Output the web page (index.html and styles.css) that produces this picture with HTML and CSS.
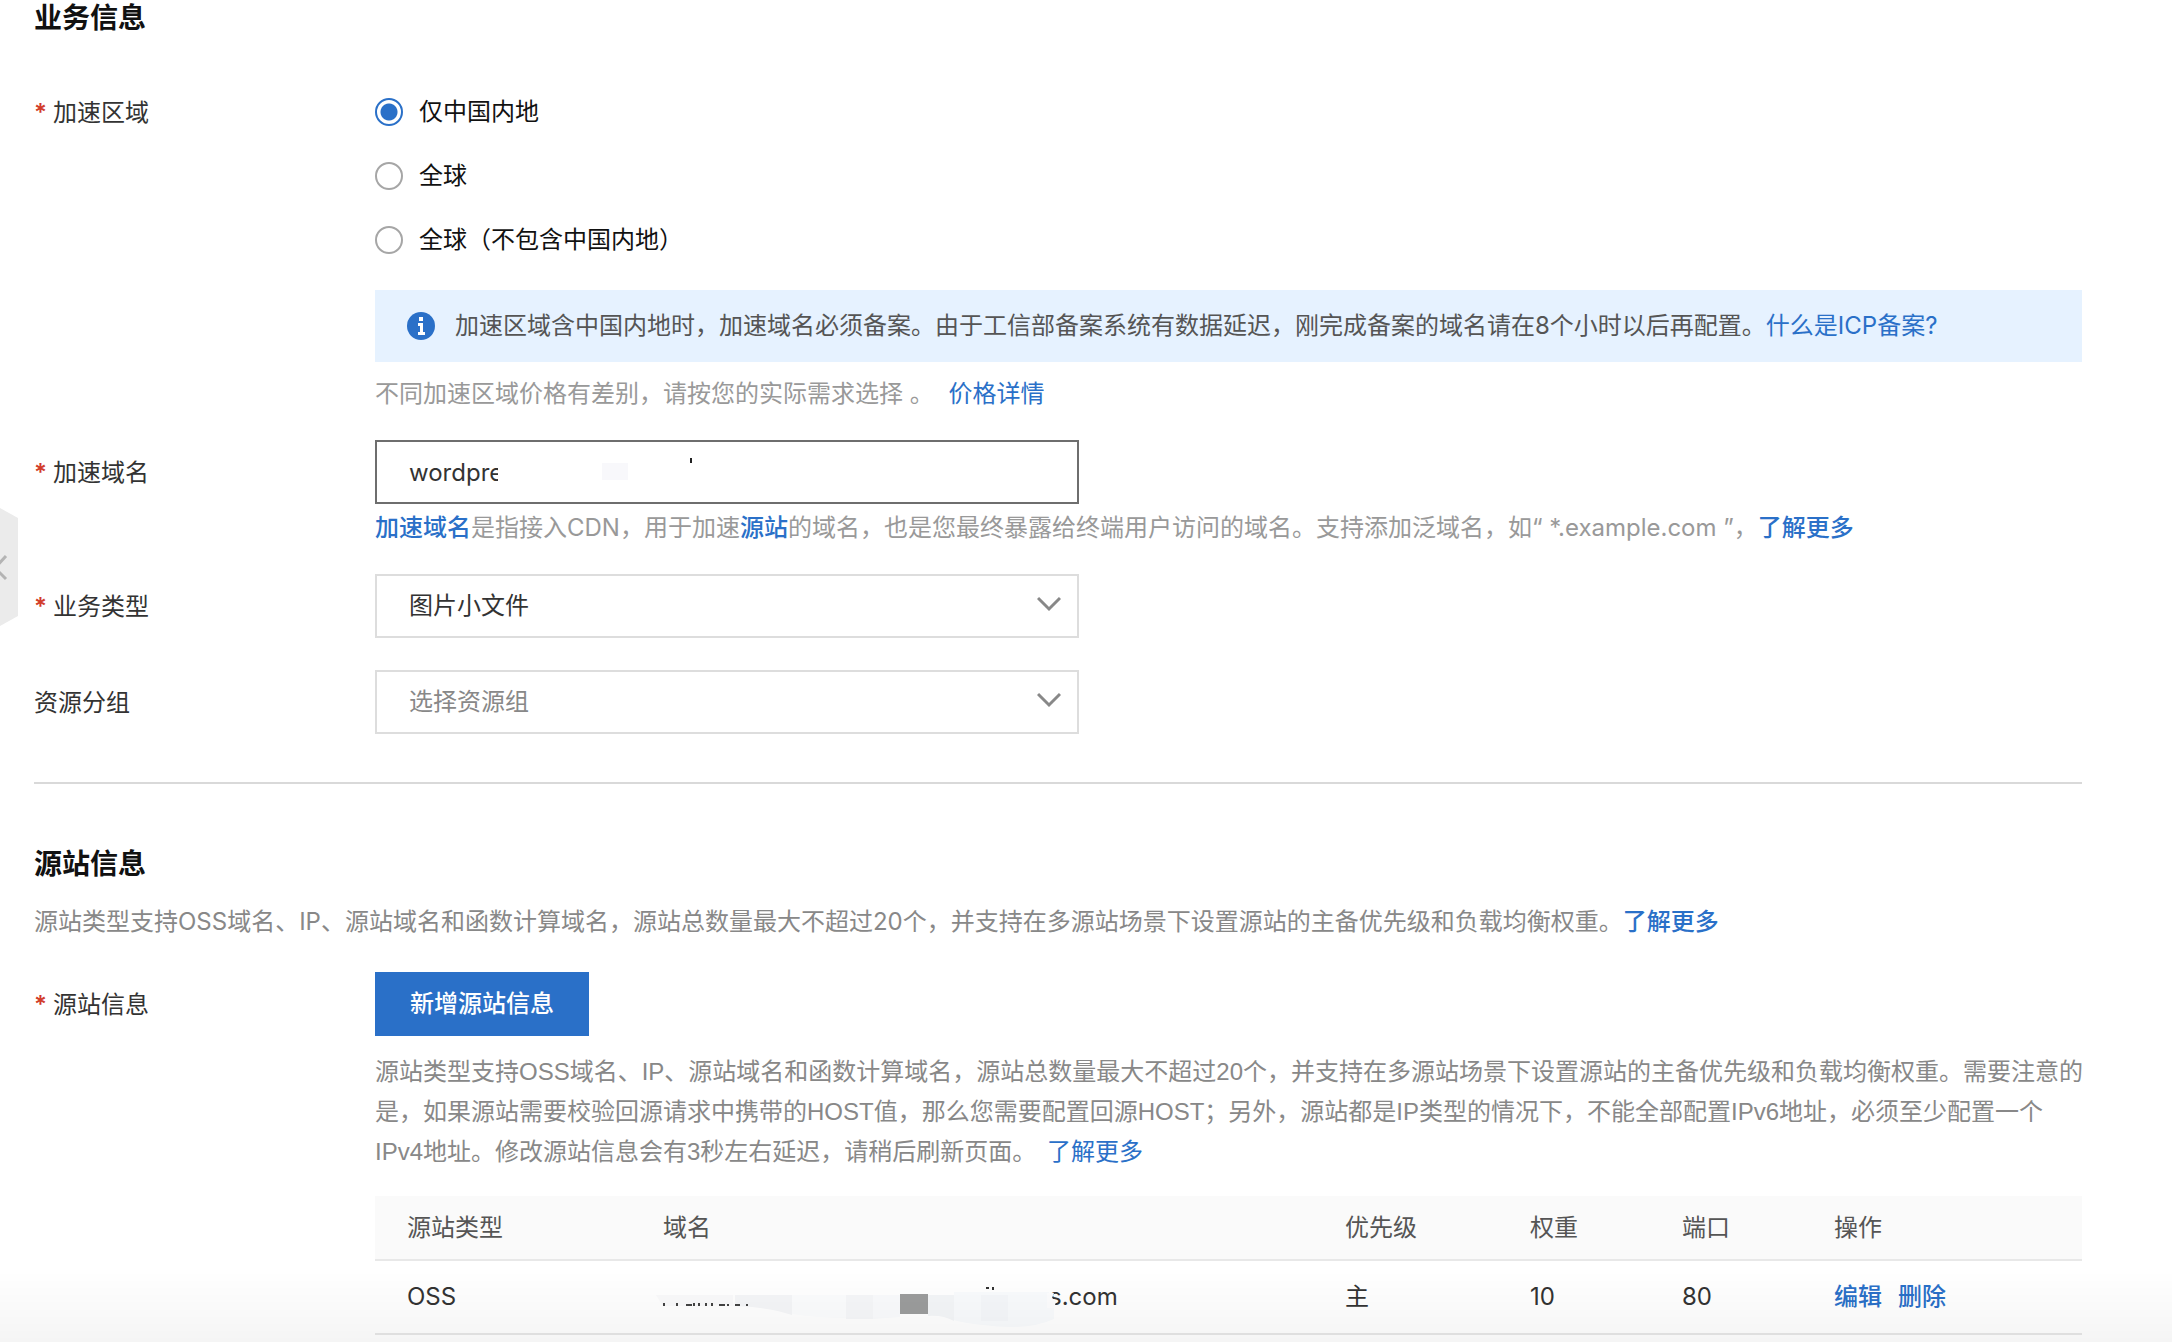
FILE: index.html
```html
<!DOCTYPE html>
<html lang="zh-CN">
<head>
<meta charset="utf-8">
<meta name="viewport" content="width=device-width, initial-scale=1">
<title>添加域名</title>
<link rel="stylesheet" href="styles.css">
</head>
<body>
<button class="side-handle" type="button" aria-label="收起">
  <svg width="18" height="118" viewBox="0 0 18 118" aria-hidden="true">
    <path d="M0 0L18 10V108L0 118Z" fill="#ebebeb"/>
    <path d="M6 48L-5 60L6 71" fill="none" stroke="#b4b4b4" stroke-width="3"/>
  </svg>
</button>

<main class="page">
  <section class="section">
    <h2 class="section-title">业务信息</h2>

    <div class="row row-region">
      <span class="label required" id="region-label">加速区域</span>
      <div class="field">
        <div class="radios" role="radiogroup" aria-labelledby="region-label">
          <label class="radio"><input type="radio" name="region" checked>仅中国内地</label>
          <label class="radio"><input type="radio" name="region">全球</label>
          <label class="radio"><input type="radio" name="region">全球（不包含中国内地）</label>
        </div>
        <div class="notice">
          <svg class="notice-icon" width="28" height="28" viewBox="0 0 28 28" aria-hidden="true">
            <circle cx="14" cy="14" r="14" fill="#2a70c8"/>
            <path d="M12 5h4v4h-4zM11 11h5v9h2v3h-7v-3h2v-6h-2z" fill="#fff"/>
          </svg>
          <p class="notice-text">加速区域含中国内地时，加速域名必须备案。由于工信部备案系统有数据延迟，刚完成备案的域名请在8个小时以后再配置。<a href="#">什么是ICP备案?</a></p>
        </div>
        <p class="hint hint-price">不同加速区域价格有差别，请按您的实际需求选择 。 <a href="#">价格详情</a></p>
      </div>
    </div>

    <div class="row row-domain">
      <label class="label required" for="domain">加速域名</label>
      <div class="field">
        <div class="control">
          <input class="box box-active" id="domain" type="text" value="wordpre">
          <svg class="mask" width="240" height="40" viewBox="0 0 240 40" aria-hidden="true">
            <path d="M0 0H240V40H0Z" fill="#fff"/>
            <path d="M104 11h26v17h-26z" fill="#f8f8fb"/>
            <path d="M192 6h2v5h-2z" fill="#222"/>
          </svg>
        </div>
        <p class="hint"><a class="strong" href="#">加速域名</a>是指接入CDN，用于加速<a class="strong" href="#">源站</a>的域名，也是您最终暴露给终端用户访问的域名。支持添加泛域名，如“ *.example.com ”，<a class="strong" href="#">了解更多</a></p>
      </div>
    </div>

    <div class="row row-type">
      <label class="label required" for="type">业务类型</label>
      <div class="field">
        <div class="control">
          <select class="box" id="type"><option>图片小文件</option></select>
          <svg class="chevron" width="24" height="16" viewBox="0 0 24 16" aria-hidden="true"><path d="M1 2L12 13L23 2" fill="none" stroke="#888" stroke-width="3"/></svg>
        </div>
      </div>
    </div>

    <div class="row row-group">
      <label class="label" for="group">资源分组</label>
      <div class="field">
        <div class="control">
          <select class="box box-empty" id="group"><option>选择资源组</option></select>
          <svg class="chevron" width="24" height="16" viewBox="0 0 24 16" aria-hidden="true"><path d="M1 2L12 13L23 2" fill="none" stroke="#888" stroke-width="3"/></svg>
        </div>
      </div>
    </div>
  </section>

  <section class="section section-origin">
    <h2 class="section-title">源站信息</h2>
    <p class="intro">源站类型支持OSS域名、IP、源站域名和函数计算域名，源站总数量最大不超过20个，并支持在多源站场景下设置源站的主备优先级和负载均衡权重。<a class="strong" href="#">了解更多</a></p>

    <div class="row row-origin">
      <span class="label required">源站信息</span>
      <div class="field">
        <button class="primary" type="button">新增源站信息</button>
        <p class="note">源站类型支持OSS域名、IP、源站域名和函数计算域名，源站总数量最大不超过20个，并支持在多源站场景下设置源站的主备优先级和负载均衡权重。需要注意的是，如果源站需要校验回源请求中携带的HOST值，那么您需要配置回源HOST；另外，源站都是IP类型的情况下，不能全部配置IPv6地址，必须至少配置一个IPv4地址。修改源站信息会有3秒左右延迟，请稍后刷新页面。 <a href="#">了解更多</a></p>
        <table class="origins">
          <colgroup>
            <col class="col-type"><col><col class="col-priority"><col class="col-number"><col class="col-number"><col class="col-action">
          </colgroup>
          <thead>
            <tr><th>源站类型</th><th>域名</th><th>优先级</th><th>权重</th><th>端口</th><th>操作</th></tr>
          </thead>
          <tbody>
            <tr>
              <td>OSS</td>
              <td>
                <div class="domain">
                  <svg class="smear" width="386" height="48" viewBox="0 0 386 48" aria-hidden="true">
                    <path d="M-7 22H70V32L82 34Q60 31 45 33H0Z" fill="#fafafb"/>
                    <path d="M72 22H129V42Q105 34 72 33Z" fill="#f5f6f8"/>
                    <path d="M129 22H183V45Q155 45 129 41Z" fill="#fcfdfe"/>
                    <path d="M183 22H210V46H183Z" fill="#f6f7f9"/>
                    <path d="M210 22H237V44L210 46Z" fill="#fafbfd"/>
                    <path d="M237 21h28v20h-28z" fill="#9c9d9d"/>
                    <path d="M265 22H291V48Q280 42 265 43Z" fill="#f4f6f8"/>
                    <path d="M291 19H386L391 30V46Q365 58 320 52Q300 50 291 47Z" fill="#f9fbfd"/>
                    <path d="M318 22h27v26h-27z" fill="#f5f7fa"/>
                    <path d="M1 30v3M14 30v3M23 32h6M31 30v3M36 30v3M43 30v3M49 30v3M56 32h6M65 31v2M72 32h5M83 32h2" fill="none" stroke="#444" stroke-width="2"/>
                    <path d="M323 14h3v2h-3zM329 14h2v3h-2z" fill="#333"/>
                    <path d="M384 20h7l-2 5 4 4-2 6h-7z" fill="#fdfdfe"/>
                  </svg>s.com
                </div>
              </td>
              <td>主</td><td>10</td><td>80</td>
              <td><div class="actions"><a class="strong" href="#">编辑</a><a class="strong" href="#">删除</a></div></td>
            </tr>
          </tbody>
        </table>
      </div>
    </div>
  </section>
</main>
<div class="bottom-shade"></div>
</body>
</html>
```
FILE: styles.css
```css
* {
  box-sizing: border-box;
}

body {
  margin: 0;
  background: #fff;
  color: #333;
  font: 24px/36px Inter, "Noto Sans CJK SC", sans-serif;
}

p,
h2 {
  margin: 0;
}

a {
  color: #2a70c8;
  text-decoration: none;
}

.strong {
  font-weight: 500;
}

.page {
  padding: 0 90px 8px 34px;
}

.section-title {
  color: #111;
  font-size: 28px;
  font-weight: 600;
}

.row {
  display: flex;
}

.row-region {
  margin-top: 44px;
}

.row-domain,
.row-type {
  margin-top: 28px;
}

.row-group {
  margin-top: 30px;
}

.row-origin {
  margin-top: 32px;
}

.label {
  flex: 0 0 341px;
  line-height: 66px;
}

.required::before {
  content: "*";
  display: inline-block;
  width: 19px;
  color: #d23c2c;
  font-weight: 600;
}

.field {
  flex: 1;
  min-width: 0;
}

.radio {
  display: flex;
  align-items: center;
  gap: 16px;
  width: max-content;
  height: 64px;
  color: #111;
}

.radio input {
  appearance: none;
  width: 28px;
  height: 28px;
  margin: 0;
  border: 2px solid #a6a6a6;
  border-radius: 50%;
}

.radio input:checked {
  border-color: #2a70c8;
  background: radial-gradient(circle, #2a70c8 8px, #fff 9px);
}

.notice {
  display: flex;
  align-items: center;
  gap: 20px;
  margin-top: 18px;
  padding: 18px 32px;
  background: #e6f2ff;
}

.notice-icon {
  flex: none;
}

.notice-text {
  color: #555;
}

.hint {
  margin-top: 6px;
  color: #999;
}

.hint-price {
  margin-top: 14px;
}

.hint-price a {
  margin-left: 8px;
}

.control {
  position: relative;
  max-width: 704px;
}

.box {
  appearance: none;
  display: block;
  width: 100%;
  height: 64px;
  margin: 0;
  padding: 0 32px;
  border: 2px solid #ddd;
  border-radius: 0;
  background: #fff;
  color: #333;
  font: inherit;
}

.box-active {
  border-color: #6e6e6e;
  outline: none;
}

.box-empty {
  color: #888;
}

.chevron {
  position: absolute;
  top: 22px;
  right: 18px;
  pointer-events: none;
}

.mask {
  position: absolute;
  top: 12px;
  left: 123px;
  pointer-events: none;
}

.section-origin {
  margin-top: 46px;
  padding-top: 62px;
  border-top: 2px solid #d9d9d9;
}

.intro {
  margin-top: 22px;
  color: #888;
}

.primary {
  display: block;
  height: 64px;
  padding: 0 35px;
  border: 0;
  background: #2a70c8;
  color: #fff;
  font: inherit;
  font-weight: 500;
}

/* The note hangs slightly past the column so that a full line keeps its last character. */
.note {
  margin: 16px -4px 0 0;
  color: #888;
  font-family: "Liberation Sans", "Noto Sans CJK SC", sans-serif;
  line-height: 40px;
}

.note a {
  margin-left: 4px;
}

.origins {
  width: 100%;
  margin-top: 24px;
  border-collapse: collapse;
  table-layout: fixed;
}

.col-type {
  width: 256px;
}

.col-priority {
  width: 185px;
}

.col-number {
  width: 152px;
}

.col-action {
  width: 280px;
}

.origins th,
.origins td {
  padding: 0 0 0 32px;
  border-bottom: 2px solid #e8e8e8;
  text-align: left;
}

.origins th {
  height: 64px;
  background: #fafafa;
  color: #555;
  font-weight: 400;
}

.origins td {
  height: 74px;
}

.domain {
  display: flex;
  align-items: center;
}

.smear {
  position: relative;
  flex: none;
  overflow: visible;
}

.actions {
  display: flex;
  gap: 16px;
}

.side-handle {
  position: fixed;
  top: 508px;
  left: 0;
  display: block;
  padding: 0;
  border: 0;
  background: none;
}

.side-handle svg {
  display: block;
}

.bottom-shade {
  position: fixed;
  right: 0;
  bottom: 0;
  left: 0;
  height: 72px;
  background: linear-gradient(rgba(0, 0, 0, 0), rgba(0, 0, 0, 0.04));
  pointer-events: none;
}
```
